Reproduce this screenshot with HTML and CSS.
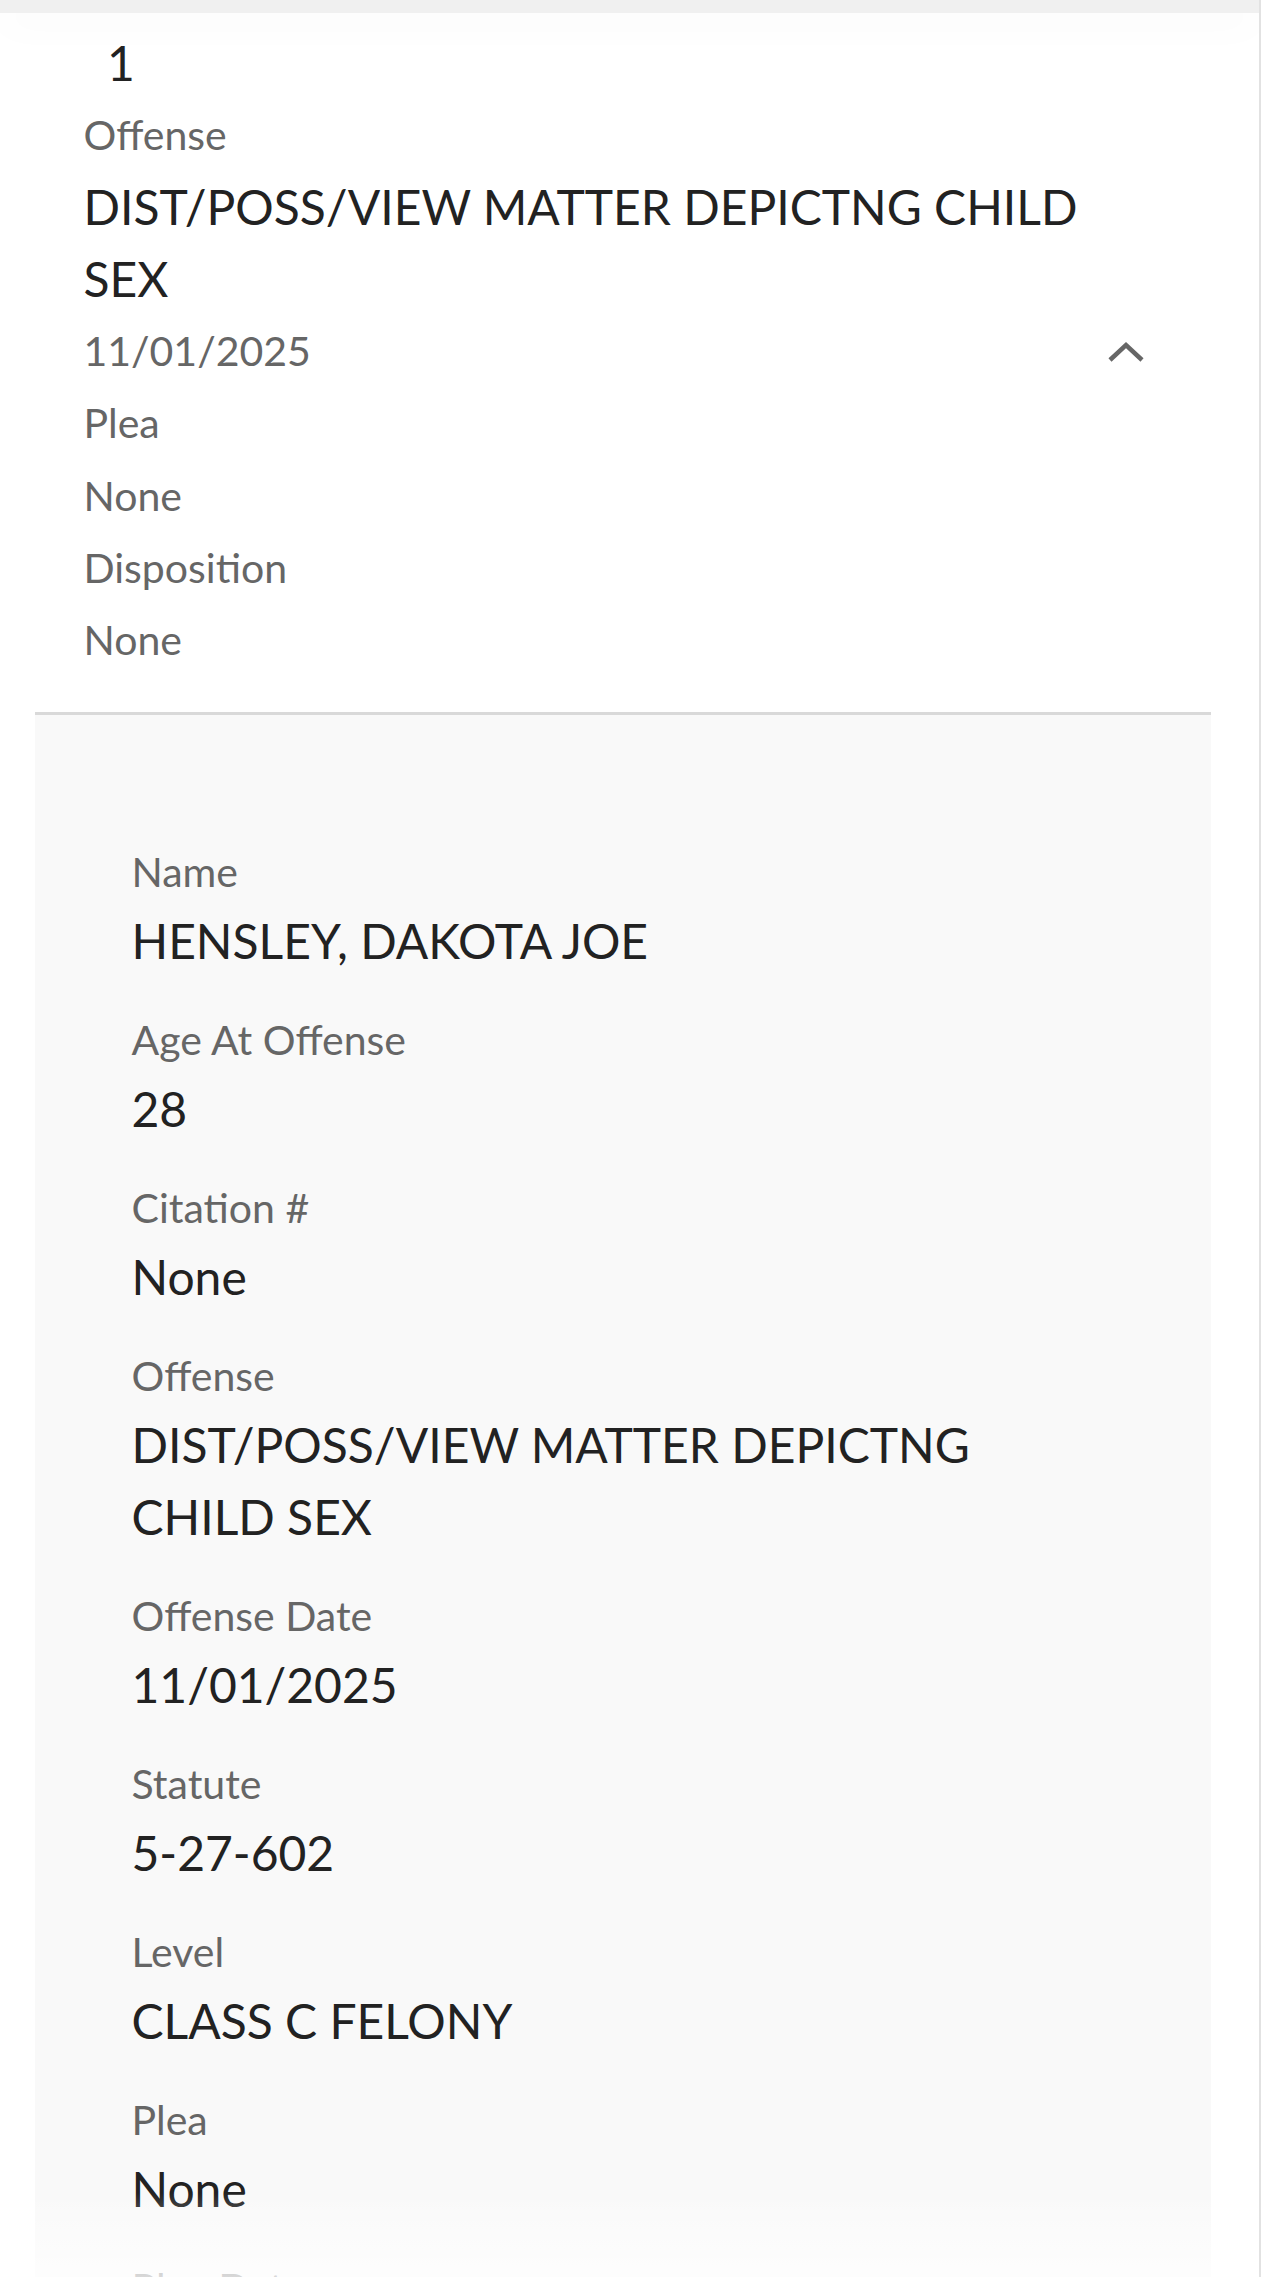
FILE: index.html
```html
<!DOCTYPE html>
<html>
<head>
<meta charset="utf-8">
<link rel="stylesheet" href="styles.css">
</head>
<body>
<div class="page">
  <div class="topbar"></div>
  <div class="card">
    <div class="summary">
      <div class="num">1</div>
      <div class="s-lbl">Offense</div>
      <div class="s-val">DIST/POSS/VIEW MATTER DEPICTNG CHILD SEX</div>
      <div class="date-row">
        <span class="s-lbl">11/01/2025</span>
        <svg class="chev" width="36" height="24" viewBox="0 0 36 24" aria-hidden="true"><polyline points="2,21 18,6 34,21" fill="none" stroke="#666666" stroke-width="4.5"/></svg>
      </div>
      <div class="s-lbl">Plea</div>
      <div class="s-lbl">None</div>
      <div class="s-lbl">Disposition</div>
      <div class="s-lbl">None</div>
    </div>
    <div class="details">
      <div class="field"><div class="f-lbl">Name</div><div class="f-val">HENSLEY, DAKOTA JOE</div></div>
      <div class="field"><div class="f-lbl">Age At Offense</div><div class="f-val">28</div></div>
      <div class="field"><div class="f-lbl">Citation #</div><div class="f-val">None</div></div>
      <div class="field"><div class="f-lbl">Offense</div><div class="f-val">DIST/POSS/VIEW MATTER DEPICTNG CHILD SEX</div></div>
      <div class="field"><div class="f-lbl">Offense Date</div><div class="f-val">11/01/2025</div></div>
      <div class="field"><div class="f-lbl">Statute</div><div class="f-val">5-27-602</div></div>
      <div class="field"><div class="f-lbl">Level</div><div class="f-val">CLASS C FELONY</div></div>
      <div class="field"><div class="f-lbl">Plea</div><div class="f-val">None</div></div>
      <div class="field"><div class="f-lbl">Plea Date</div><div class="f-val">None</div></div>
    </div>
  </div>
  <div class="fade"></div>
</div>
</body>
</html>
```
FILE: styles.css
```css
html, body {
  margin: 0;
  padding: 0;
  overflow: hidden;
  background: #ffffff;
}

.page {
  position: relative;
  width: 1259px;
  height: 2277px;
  overflow: hidden;
  border-right: 2px solid #e2e2e2;
  font-family: "Lato", "Open Sans", sans-serif;
  color: #222222;
}

.topbar {
  position: relative;
  z-index: 2;
  height: 13px;
  background: #f0f0f0;
  box-shadow: 0 10px 40px rgba(0, 0, 0, 0.04);
}

.card {
  margin-left: 35px;
  width: 1176px;
  min-height: 2264px;
  background: #ffffff;
}

.summary {
  padding: 14px 67px 36px 48.5px;
}

.num {
  font-size: 48px;
  line-height: 72px;
  padding-left: 23.5px;
  color: #222222;
}

.s-lbl {
  display: block;
  font-size: 41px;
  line-height: 72.2px;
  color: #666666;
}

.s-val {
  font-size: 48px;
  line-height: 72px;
  color: #222222;
}

.date-row {
  display: flex;
  justify-content: space-between;
  align-items: center;
}

.chev {
  display: block;
  margin-top: 0;
}

.details {
  border-top: 3px solid #d9d9d9;
  background: #f9f9f9;
  padding: 124px 98px 0 96.5px;
  min-height: 1600px;
}

.field {
  margin-bottom: 30px;
}

.f-lbl {
  font-size: 41px;
  line-height: 66px;
  color: #666666;
}

.f-val {
  font-size: 48px;
  line-height: 72px;
  color: #222222;
}

.fade {
  position: absolute;
  left: 0;
  right: 0;
  bottom: 0;
  height: 84px;
  background: linear-gradient(to bottom, rgba(255, 255, 255, 0), rgba(255, 255, 255, 0.75));
}
```
